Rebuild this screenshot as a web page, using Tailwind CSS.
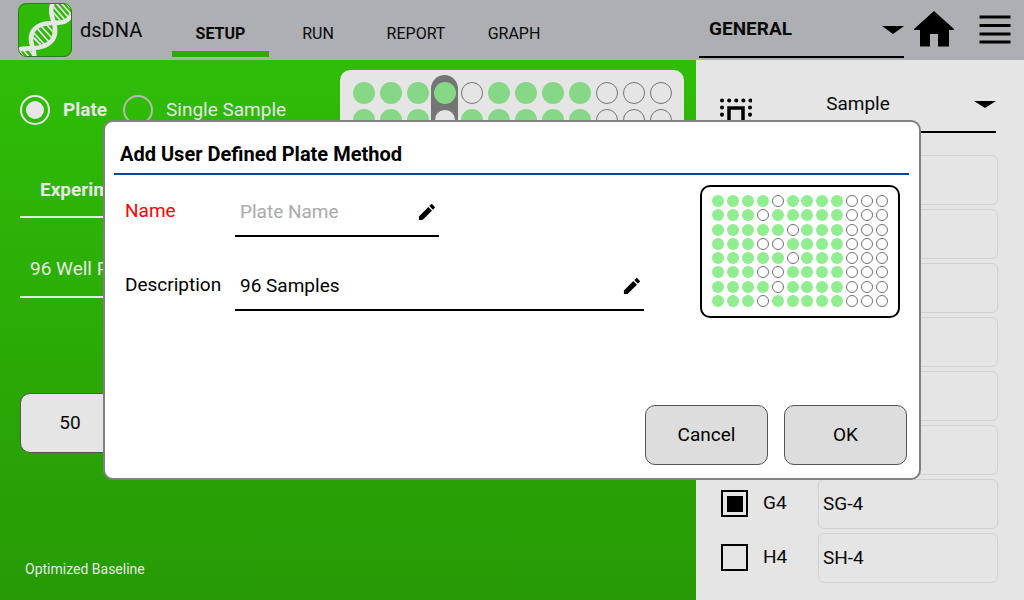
<!DOCTYPE html>
<html lang="en">
<head>
<meta charset="utf-8">
<meta name="viewport" content="width=device-width, initial-scale=1">
<title>dsDNA</title>
<script src="https://cdn.jsdelivr.net/npm/@tailwindcss/browser@4"></script>
</head>
<body class="flex min-h-screen flex-col overflow-hidden font-['Roboto',sans-serif] text-[19px]/7 text-[#0a0a0a]">

<header class="flex h-[60px] shrink-0 items-center bg-[#aeafb3] pl-[18px] pr-[13px]">
  <svg class="size-[54px] shrink-0" viewBox="0 0 54 54" fill="none" aria-hidden="true">
    <defs><clipPath id="tile"><rect width="54" height="54" rx="8"/></clipPath></defs>
    <g clip-path="url(#tile)">
      <rect width="54" height="54" fill="#2fba09"/>
      <g stroke="#e6e6e6" stroke-width="1.8">
        <path d="M14 33l9 9M14 28l13 14M18 24l13 15M22 22l12 13M27 20l9 10"/>
        <path d="M35 3l12 14M38 0l13 15M43 0l10 11M48 0l6 6M35 9l7 8"/>
        <path d="M2 49l4 5M6 48l5 6M11 47l4 5"/>
      </g>
      <g stroke="#e6e6e6" stroke-width="4.600">
        <path d="M16 55C18 47 12 43 13 34C14 25 22 20 35 20C45 20 51 19 54 10"/>
        <path d="M-1 47C8 44 17 47 26 43C36 39 39 31 36 20C33 11 32 7 35 -1"/>
      </g>
      <path d="M-1 50l4 5" stroke="#e6e6e6" stroke-width="3"/>
    </g>
    <rect x=".5" y=".5" width="53" height="53" rx="8" stroke="#287c14"/>
  </svg>
  <h1 class="ml-2 w-[92px] pb-px text-xl">dsDNA</h1>
  <nav class="flex h-full text-base">
    <a href="#setup" aria-current="page" class="mb-[3px] flex w-[97px] items-end justify-center border-b-6 border-[#2bad08] pb-[5px] font-bold">SETUP</a>
    <a href="#run" class="flex w-[98px] items-end justify-center pb-[14px]">RUN</a>
    <a href="#report" class="flex w-[98px] items-end justify-center pb-[14px]">REPORT</a>
    <a href="#graph" class="flex w-[98px] items-end justify-center pb-[14px]">GRAPH</a>
  </nav>
  <div class="relative ml-auto mt-[-4px] h-[60px] w-[205px]">
    <select aria-label="Category" class="h-full w-full appearance-none border-b-2 border-black pl-[10px] pr-8 pt-1 font-bold"><option>GENERAL</option></select>
    <svg class="pointer-events-none absolute right-0 top-7 h-2 w-[22px]" viewBox="0 0 22 8"><path d="M0 0H22L11 8Z"/></svg>
  </div>
  <button type="button" aria-label="Home" class="mb-[2px] ml-[10px] h-[36px] w-10">
    <svg class="h-full w-full" viewBox="0 0 40 36"><path d="M20 0L41 19H35V35.500H24V23H16V35.500H6V19H-1Z"/></svg>
  </button>
  <button type="button" aria-label="Menu" class="ml-[25px] h-[30px] w-[32px]">
    <svg class="h-full w-full" viewBox="0 0 32 30" stroke="#000" stroke-width="3"><path d="M.5 2H31.500M.5 10.500H31.500M.5 19H31.500M.5 27H31.500"/></svg>
  </button>
</header>

<main class="flex flex-1">
  <section class="flex flex-1 flex-col bg-linear-to-b from-[#2fbd07] to-[#279a05] pl-5 pr-3 text-[#e6e6e6]">
    <div class="flex justify-between pt-[10px]">
      <div>
        <fieldset class="mt-[25px] flex items-center">
          <label class="flex w-[103px] items-center gap-[13px] font-bold">
            <input type="radio" name="mode" checked class="grid size-[30px] appearance-none place-items-center rounded-full border-2 border-[#e6e6e6] before:size-[18px] before:rounded-full before:bg-[#e6e6e6]">Plate</label>
          <label class="flex items-center gap-[13px]">
            <input type="radio" name="mode" class="size-[30px] appearance-none rounded-full border-2 border-[#b8b8b8]">Single Sample</label>
        </fieldset>
        <input aria-label="Experiment name" value="Experiment" class="mt-[39px] block h-[54px] w-[280px] border-b-2 border-[#e6e6e6] px-5 pb-px font-bold">
        <select aria-label="Plate method" class="mt-6 block h-[56px] w-[280px] appearance-none border-b-2 border-[#e6e6e6] px-[10px]"><option>96 Well Plate</option></select>
      </div>
      <div id="plate" class="flex self-start rounded-[10px] bg-[#e5e5e5] px-[10px] py-[5px]"></div>
    </div>
    <button type="button" class="mt-[88px] h-[60px] w-[100px] rounded-[10px] border border-[#555] bg-[#e5e5e5] text-[#0a0a0a]">50</button>
    <p class="mb-[21px] mt-auto pl-[5px] text-sm">Optimized Baseline</p>
  </section>

  <aside class="w-[328px] bg-[#e5e5e5] pl-6 pr-[26px]">
    <div class="flex h-[73px] items-end justify-between pr-[2px]">
      <button type="button" aria-label="Select all wells" class="mb-[3px] size-8">
        <svg class="size-full" viewBox="0 0 32 32">
          <rect x="9" y="10" width="14" height="14" fill="none" stroke="#000" stroke-width="3.500"/>
          <g fill="none" stroke="#000" stroke-width="4" stroke-linecap="round"><path stroke-dasharray=".1 7" d="M2 2.500H31M2 30H31M2 9.500V30M30 9.500V30"/></g>
        </svg>
      </button>
      <div class="relative h-[58px] w-[228px]">
        <select aria-label="Column type" class="h-full w-full appearance-none border-b-2 border-black pr-12 pt-[2px] [text-align-last:center]"><option>Sample</option></select>
        <svg class="pointer-events-none absolute right-0 top-[26px] h-[7px] w-[22px]" viewBox="0 0 22 7"><path d="M0 0H22L11 7Z"/></svg>
      </div>
    </div>
    <div id="rows" class="mt-[22px] flex flex-col gap-1"></div>
  </aside>
</main>

<div class="fixed inset-0 flex items-center justify-center">
  <div role="dialog" aria-modal="true" aria-labelledby="title" class="flex h-[360px] w-[818px] flex-col rounded-[10px] border-2 border-[#808080] bg-white pb-[13px] pl-[9px] pr-[10px] text-black">
    <h2 id="title" class="h-[53px] border-b-2 border-[#0b47a1] pl-[6px] pt-[18px] text-xl/7 font-bold">Add User Defined Plate Method</h2>
    <div class="flex justify-between pl-[11px] pr-[9px] pt-[10px]">
      <form id="method" class="flex flex-col gap-[22px]">
        <div class="flex h-[52px] items-center">
          <label for="name" class="w-[110px] text-[#f00]">Name</label>
          <div class="flex h-full w-[204px] items-center border-b-2 border-black pl-[5px] pr-[3px] pt-[3px]">
            <input id="name" placeholder="Plate Name" class="min-w-0 flex-1 outline-none placeholder:text-[#aaa]">
            <svg class="size-[18px]" viewBox="0 0 20 20"><path d="M1 15V19H5L15.500 8.500L11.500 4.500ZM18.500 5.500Q19.200 4.800 18.500 4.100L15.900 1.500Q15.200 .8 14.500 1.500L12.600 3.400L16.600 7.400Z"/></svg>
          </div>
        </div>
        <div class="flex h-[52px] items-center">
          <label for="description" class="w-[110px]">Description</label>
          <div class="flex h-full w-[409px] items-center border-b-2 border-black pl-[5px] pr-[3px] pt-[3px]">
            <input id="description" value="96 Samples" class="min-w-0 flex-1 outline-none">
            <svg class="size-[18px]" viewBox="0 0 20 20"><path d="M1 15V19H5L15.500 8.500L11.500 4.500ZM18.500 5.500Q19.200 4.800 18.500 4.100L15.900 1.500Q15.200 .8 14.500 1.500L12.600 3.400L16.600 7.400Z"/></svg>
          </div>
        </div>
      </form>
      <div id="preview" class="flex h-[133px] w-[200px] flex-col justify-between rounded-[10px] border-2 border-black px-[10px] pb-[9px] pt-2"></div>
    </div>
    <div class="mt-auto flex justify-end gap-4 pr-[2px]">
      <button type="button" class="h-[60px] w-[123px] rounded-[10px] border border-[#555] bg-[#ddd]">Cancel</button>
      <button type="submit" form="method" class="h-[60px] w-[123px] rounded-[10px] border border-[#555] bg-[#ddd]">OK</button>
    </div>
  </div>
</div>

<script>
  // One string per plate row: x = filled well, o = empty well.
  const wells = ['xxxxoxxxxooo', 'xxxoxxxxxooo', 'xxxxxoxxxooo', 'xxxooxxxxooo',
                 'xxxxxoxxxooo', 'xxxooxxxxooo', 'xxxxoxxxxooo', 'xxxoxxxxxooo'];
  const selected = 3;

  document.getElementById('plate').innerHTML = [...wells[0]].map((_, c) => {
    const column = c === selected ? 'bg-[#757575]' : '';
    return `<div class="flex w-[27px] flex-col items-center gap-[5px] rounded-full py-[7px] ${column}">` +
      wells.map(r => `<i class="size-[22px] rounded-full ${r[c] === 'x' ? 'bg-[#86d886]' : 'border border-[#757575] bg-[#e5e5e5]'}"></i>`).join('') +
      '</div>';
  }).join('');

  document.getElementById('preview').innerHTML = wells.map(r =>
    '<div class="flex justify-between">' +
    [...r].map(w => `<i class="size-3 rounded-full ${w === 'x' ? 'bg-[#90ee90]' : 'border border-[#707070]'}"></i>`).join('') +
    '</div>').join('');

  document.getElementById('rows').innerHTML = [...'ABCDEFGH'].map((l, i) =>
    `<div class="flex h-[50px] items-center">
      <input type="checkbox" id="well${l}" ${wells[i][selected] === 'x' ? 'checked' : ''} class="mb-px ml-px grid size-[27px] appearance-none place-items-center border-2 border-black checked:before:size-4 checked:before:bg-black">
      <label for="well${l}" class="ml-[15px] w-[55px] pb-[2px]">${l}4</label>
      <input aria-label="${l}4 sample name" value="S${l}-4" class="h-full min-w-0 flex-1 rounded-[6px] border border-[#cfd2d4] px-1 pb-[2px]">
    </div>`).join('');
</script>
</body>
</html>
